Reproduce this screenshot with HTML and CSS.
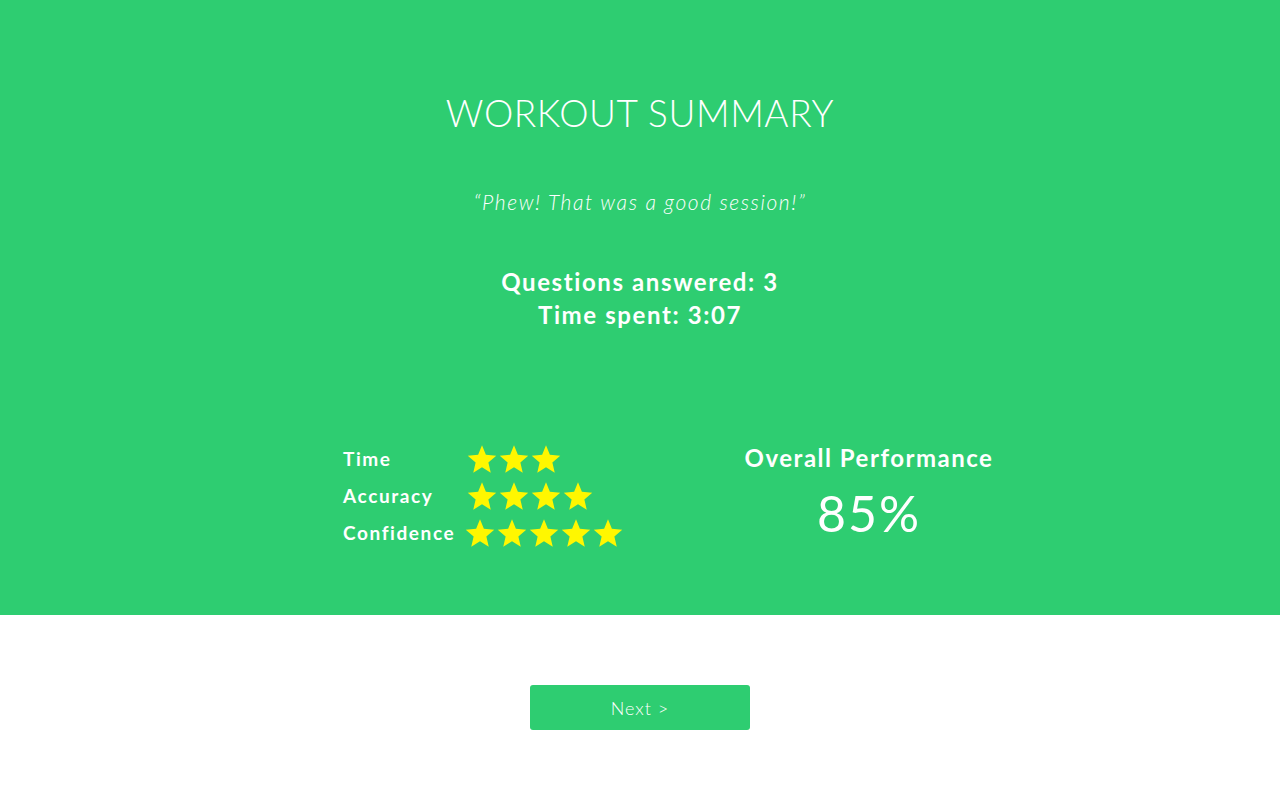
FILE: index.html
```html
<!DOCTYPE html>
<html>
<head>
<meta charset="utf-8">
<link rel="stylesheet" href="styles.css">
</head>
<body>
<section class="hero">
  <h1 class="title">WORKOUT SUMMARY</h1>
  <p class="quote">“Phew! That was a good session!”</p>
  <div class="totals">
    <div>Questions answered: 3</div>
    <div>Time spent: 3:07</div>
  </div>
  <div class="stats">
    <div class="ratings">
      <div class="row"><span class="label">Time</span><span class="stars"><svg class="star" viewBox="0 0 24 24"><polygon points="12,1 15.1,8.6 23.4,9.3 17.1,14.8 19,23 12,18.6 5,23 6.9,14.8 0.6,9.3 8.9,8.6"/></svg><svg class="star" viewBox="0 0 24 24"><polygon points="12,1 15.1,8.6 23.4,9.3 17.1,14.8 19,23 12,18.6 5,23 6.9,14.8 0.6,9.3 8.9,8.6"/></svg><svg class="star" viewBox="0 0 24 24"><polygon points="12,1 15.1,8.6 23.4,9.3 17.1,14.8 19,23 12,18.6 5,23 6.9,14.8 0.6,9.3 8.9,8.6"/></svg></span></div>
      <div class="row"><span class="label">Accuracy</span><span class="stars"><svg class="star" viewBox="0 0 24 24"><polygon points="12,1 15.1,8.6 23.4,9.3 17.1,14.8 19,23 12,18.6 5,23 6.9,14.8 0.6,9.3 8.9,8.6"/></svg><svg class="star" viewBox="0 0 24 24"><polygon points="12,1 15.1,8.6 23.4,9.3 17.1,14.8 19,23 12,18.6 5,23 6.9,14.8 0.6,9.3 8.9,8.6"/></svg><svg class="star" viewBox="0 0 24 24"><polygon points="12,1 15.1,8.6 23.4,9.3 17.1,14.8 19,23 12,18.6 5,23 6.9,14.8 0.6,9.3 8.9,8.6"/></svg><svg class="star" viewBox="0 0 24 24"><polygon points="12,1 15.1,8.6 23.4,9.3 17.1,14.8 19,23 12,18.6 5,23 6.9,14.8 0.6,9.3 8.9,8.6"/></svg></span></div>
      <div class="row"><span class="label">Confidence</span><span class="stars"><svg class="star" viewBox="0 0 24 24"><polygon points="12,1 15.1,8.6 23.4,9.3 17.1,14.8 19,23 12,18.6 5,23 6.9,14.8 0.6,9.3 8.9,8.6"/></svg><svg class="star" viewBox="0 0 24 24"><polygon points="12,1 15.1,8.6 23.4,9.3 17.1,14.8 19,23 12,18.6 5,23 6.9,14.8 0.6,9.3 8.9,8.6"/></svg><svg class="star" viewBox="0 0 24 24"><polygon points="12,1 15.1,8.6 23.4,9.3 17.1,14.8 19,23 12,18.6 5,23 6.9,14.8 0.6,9.3 8.9,8.6"/></svg><svg class="star" viewBox="0 0 24 24"><polygon points="12,1 15.1,8.6 23.4,9.3 17.1,14.8 19,23 12,18.6 5,23 6.9,14.8 0.6,9.3 8.9,8.6"/></svg><svg class="star" viewBox="0 0 24 24"><polygon points="12,1 15.1,8.6 23.4,9.3 17.1,14.8 19,23 12,18.6 5,23 6.9,14.8 0.6,9.3 8.9,8.6"/></svg></span></div>
    </div>
    <div class="overall">
      <div class="overall-label">Overall Performance</div>
      <div class="overall-value">85%</div>
    </div>
  </div>
</section>
<section class="footer">
  <button class="next">Next &gt;</button>
</section>
</body>
</html>
```
FILE: styles.css
```css
* { box-sizing: border-box; }
html, body { margin: 0; padding: 0; }
body {
  font-family: Lato, "Open Sans", sans-serif;
  background: #ffffff;
  color: #ffffff;
}
.hero {
  background: #2ecd71;
  height: 615px;
  padding-top: 90px;
  display: flex;
  flex-direction: column;
  align-items: center;
}
.title {
  margin: 0;
  font-weight: 300;
  font-size: 37px;
  line-height: 46px;
  letter-spacing: 0.6px;
}
.quote {
  margin: 53px 0 0;
  font-style: italic;
  font-weight: 300;
  font-size: 21px;
  line-height: 26px;
  letter-spacing: 1.6px;
}
.totals {
  margin-top: 50px;
  text-align: center;
  font-size: 24px;
  font-weight: 700;
  line-height: 33px;
  letter-spacing: 1.6px;
}
.stats {
  align-self: flex-start;
  margin-left: 343px;
  margin-top: 112px;
  display: flex;
  gap: 121px;
}
.ratings {
  width: 280px;
  display: flex;
  flex-direction: column;
  gap: 7px;
}
.row {
  display: flex;
  align-items: center;
  height: 30px;
}
.label {
  width: 124px;
  font-size: 19px;
  font-weight: 700;
  letter-spacing: 1.6px;
}
.stars {
  display: flex;
  gap: 2px;
  padding-top: 2px;
}
.star {
  width: 30px;
  height: 30px;
  fill: #fff700;
}
.overall {
  width: 250px;
  text-align: center;
}
.overall-label {
  font-size: 24px;
  font-weight: 700;
  letter-spacing: 1.5px;
  line-height: 30px;
}
.overall-value {
  margin-top: 12px;
  font-size: 50px;
  font-weight: 400;
  letter-spacing: 2px;
  line-height: 56px;
}
.footer {
  display: flex;
  justify-content: center;
  padding-top: 70px;
}
.next {
  width: 220px;
  height: 45px;
  border: none;
  border-radius: 3px;
  background: #2ecd71;
  color: #ffffff;
  font-family: Lato, "Open Sans", sans-serif;
  font-size: 18px;
  font-weight: 300;
  letter-spacing: 1px;
}
```
